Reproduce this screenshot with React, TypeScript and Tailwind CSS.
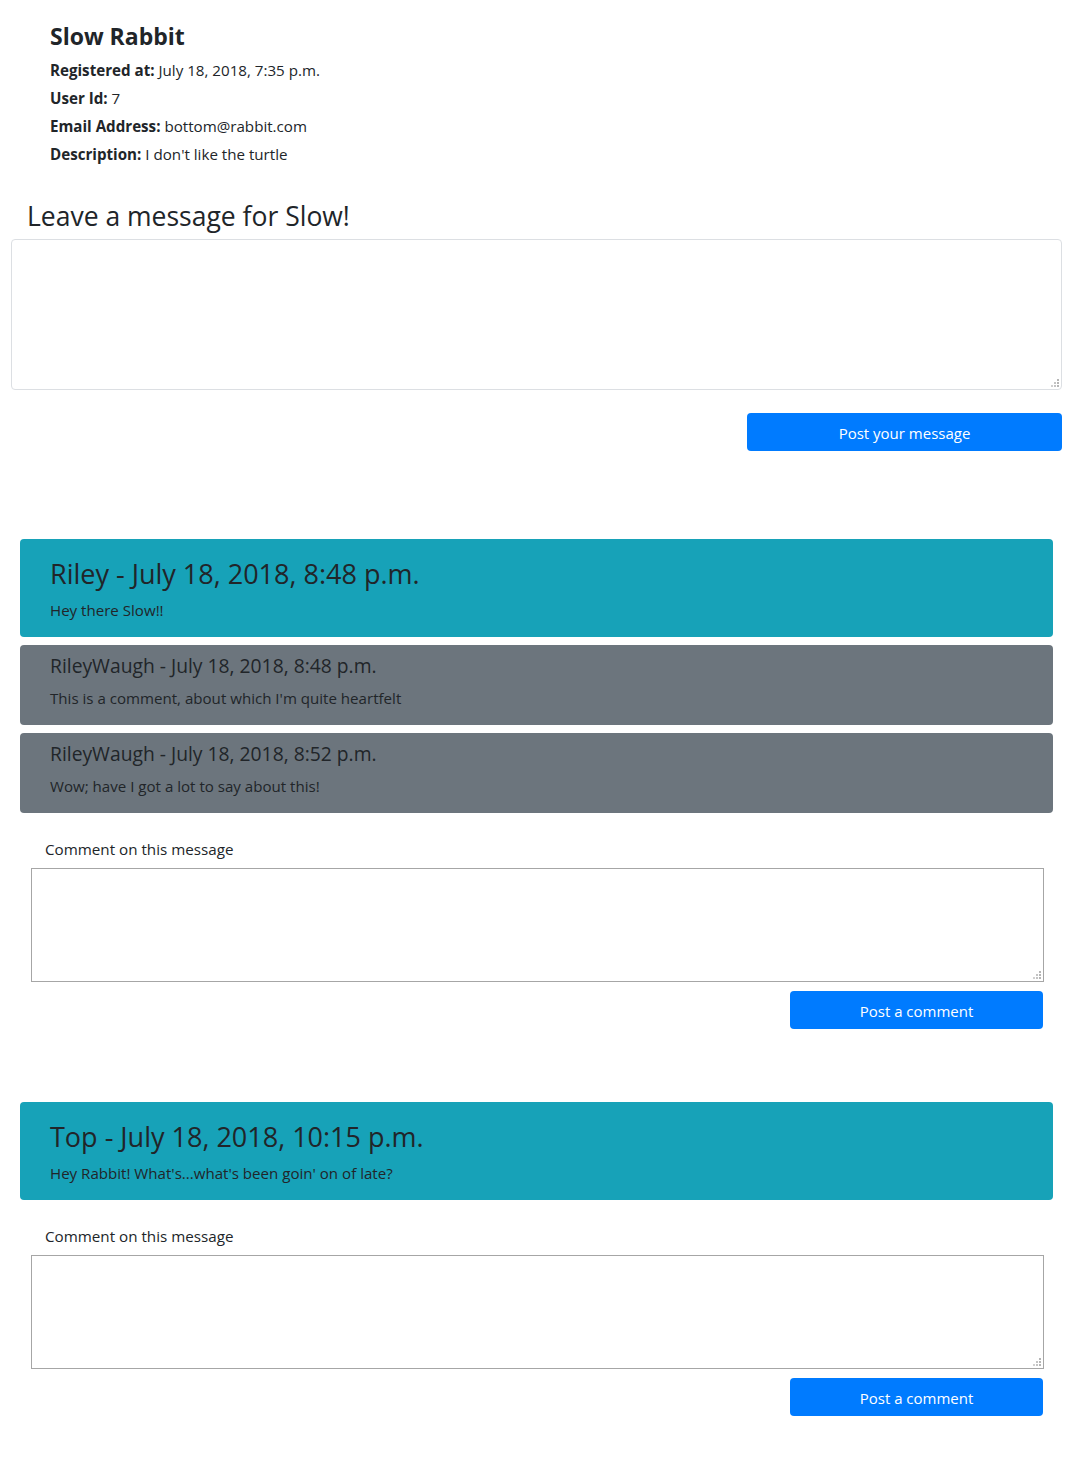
import React from "react";

const font = { fontFamily: '"Open Sans", "Noto Sans", sans-serif' };

function Grip() {
  return (
    <svg
      className="pointer-events-none absolute bottom-[3px] right-[3px]"
      width="8"
      height="8"
      viewBox="0 0 8 8"
    >
      <rect x="6" y="0" width="2" height="2" fill="#b5b5b5" />
      <rect x="3" y="3" width="2" height="2" fill="#c4c4c4" />
      <rect x="6" y="3" width="2" height="2" fill="#b5b5b5" />
      <rect x="0" y="6" width="2" height="2" fill="#d0d0d0" />
      <rect x="3" y="6" width="2" height="2" fill="#c4c4c4" />
      <rect x="6" y="6" width="2" height="2" fill="#b5b5b5" />
    </svg>
  );
}

function Message({
  title,
  body,
  comments,
}: {
  title: string;
  body: string;
  comments: { title: string; body: string }[];
}) {
  return (
    <div>
      <div className="ml-[20px] mr-[28px] rounded-[4px] bg-[#17a2b8] pl-[30px] pt-[18px] pb-[15px] text-[#212529]">
        <div className="text-[27px] leading-[34px]">{title}</div>
        <div className="mt-[7px] text-[15.1px] leading-[24px]">{body}</div>
      </div>
      {comments.map((c, i) => (
        <div
          key={i}
          className="ml-[20px] mr-[28px] mt-[8px] rounded-[4px] bg-[#6c757d] pl-[30px] pt-[9px] pb-[15px] text-[#212529]"
        >
          <div className="text-[19.3px] leading-[24px]">{c.title}</div>
          <div className="mt-[8px] text-[15.1px] leading-[24px]">{c.body}</div>
        </div>
      ))}
      <div className="ml-[45px] mt-[24px] text-[15.2px] leading-[24px] text-[#212529]">
        Comment on this message
      </div>
      <div className="relative ml-[31px] mr-[37px] mt-[7px]">
        <textarea className="block h-[114px] w-full resize-none border border-[#a6a6a6] bg-white outline-none" />
        <Grip />
      </div>
      <div className="mr-[38px] mt-[9px] flex justify-end">
        <button className="h-[38px] w-[253px] rounded-[4px] bg-[#007bff] pt-[3px] text-[15px] text-white">
          Post a comment
        </button>
      </div>
    </div>
  );
}

export default function App() {
  return (
    <div className="min-h-[1465px] w-[1081px] bg-white text-[#212529]" style={font}>
      <div className="pl-[50px] pt-[22px]">
        <div className="text-[23px] font-bold leading-[29px]">Slow Rabbit</div>
        <div className="mt-[5px] text-[15.15px] leading-[28px]">
          <div>
            <span className="font-bold">Registered at:</span> July 18, 2018, 7:35 p.m.
          </div>
          <div>
            <span className="font-bold">User Id:</span> 7
          </div>
          <div>
            <span className="font-bold">Email Address:</span> bottom@rabbit.com
          </div>
          <div>
            <span className="font-bold">Description:</span> I don't like the turtle
          </div>
        </div>
      </div>
      <div className="ml-[27px] mt-[31px] text-[26.5px] leading-[34px]">Leave a message for Slow!</div>
      <div className="relative ml-[11px] mr-[19px] mt-[6px]">
        <textarea className="block h-[151px] w-full resize-none rounded-[4px] border border-[#dcdfe3] bg-white outline-none" />
        <Grip />
      </div>
      <div className="mr-[19px] mt-[23px] flex justify-end">
        <button className="h-[38px] w-[315px] rounded-[4px] bg-[#007bff] pt-[3px] text-[15px] text-white">
          Post your message
        </button>
      </div>
      <div className="mt-[88px]">
        <Message
          title="Riley - July 18, 2018, 8:48 p.m."
          body="Hey there Slow!!"
          comments={[
            { title: "RileyWaugh - July 18, 2018, 8:48 p.m.", body: "This is a comment, about which I'm quite heartfelt" },
            { title: "RileyWaugh - July 18, 2018, 8:52 p.m.", body: "Wow; have I got a lot to say about this!" },
          ]}
        />
      </div>
      <div className="mt-[73px]">
        <Message
          title="Top - July 18, 2018, 10:15 p.m."
          body="Hey Rabbit! What's...what's been goin' on of late?"
          comments={[]}
        />
      </div>
    </div>
  );
}
